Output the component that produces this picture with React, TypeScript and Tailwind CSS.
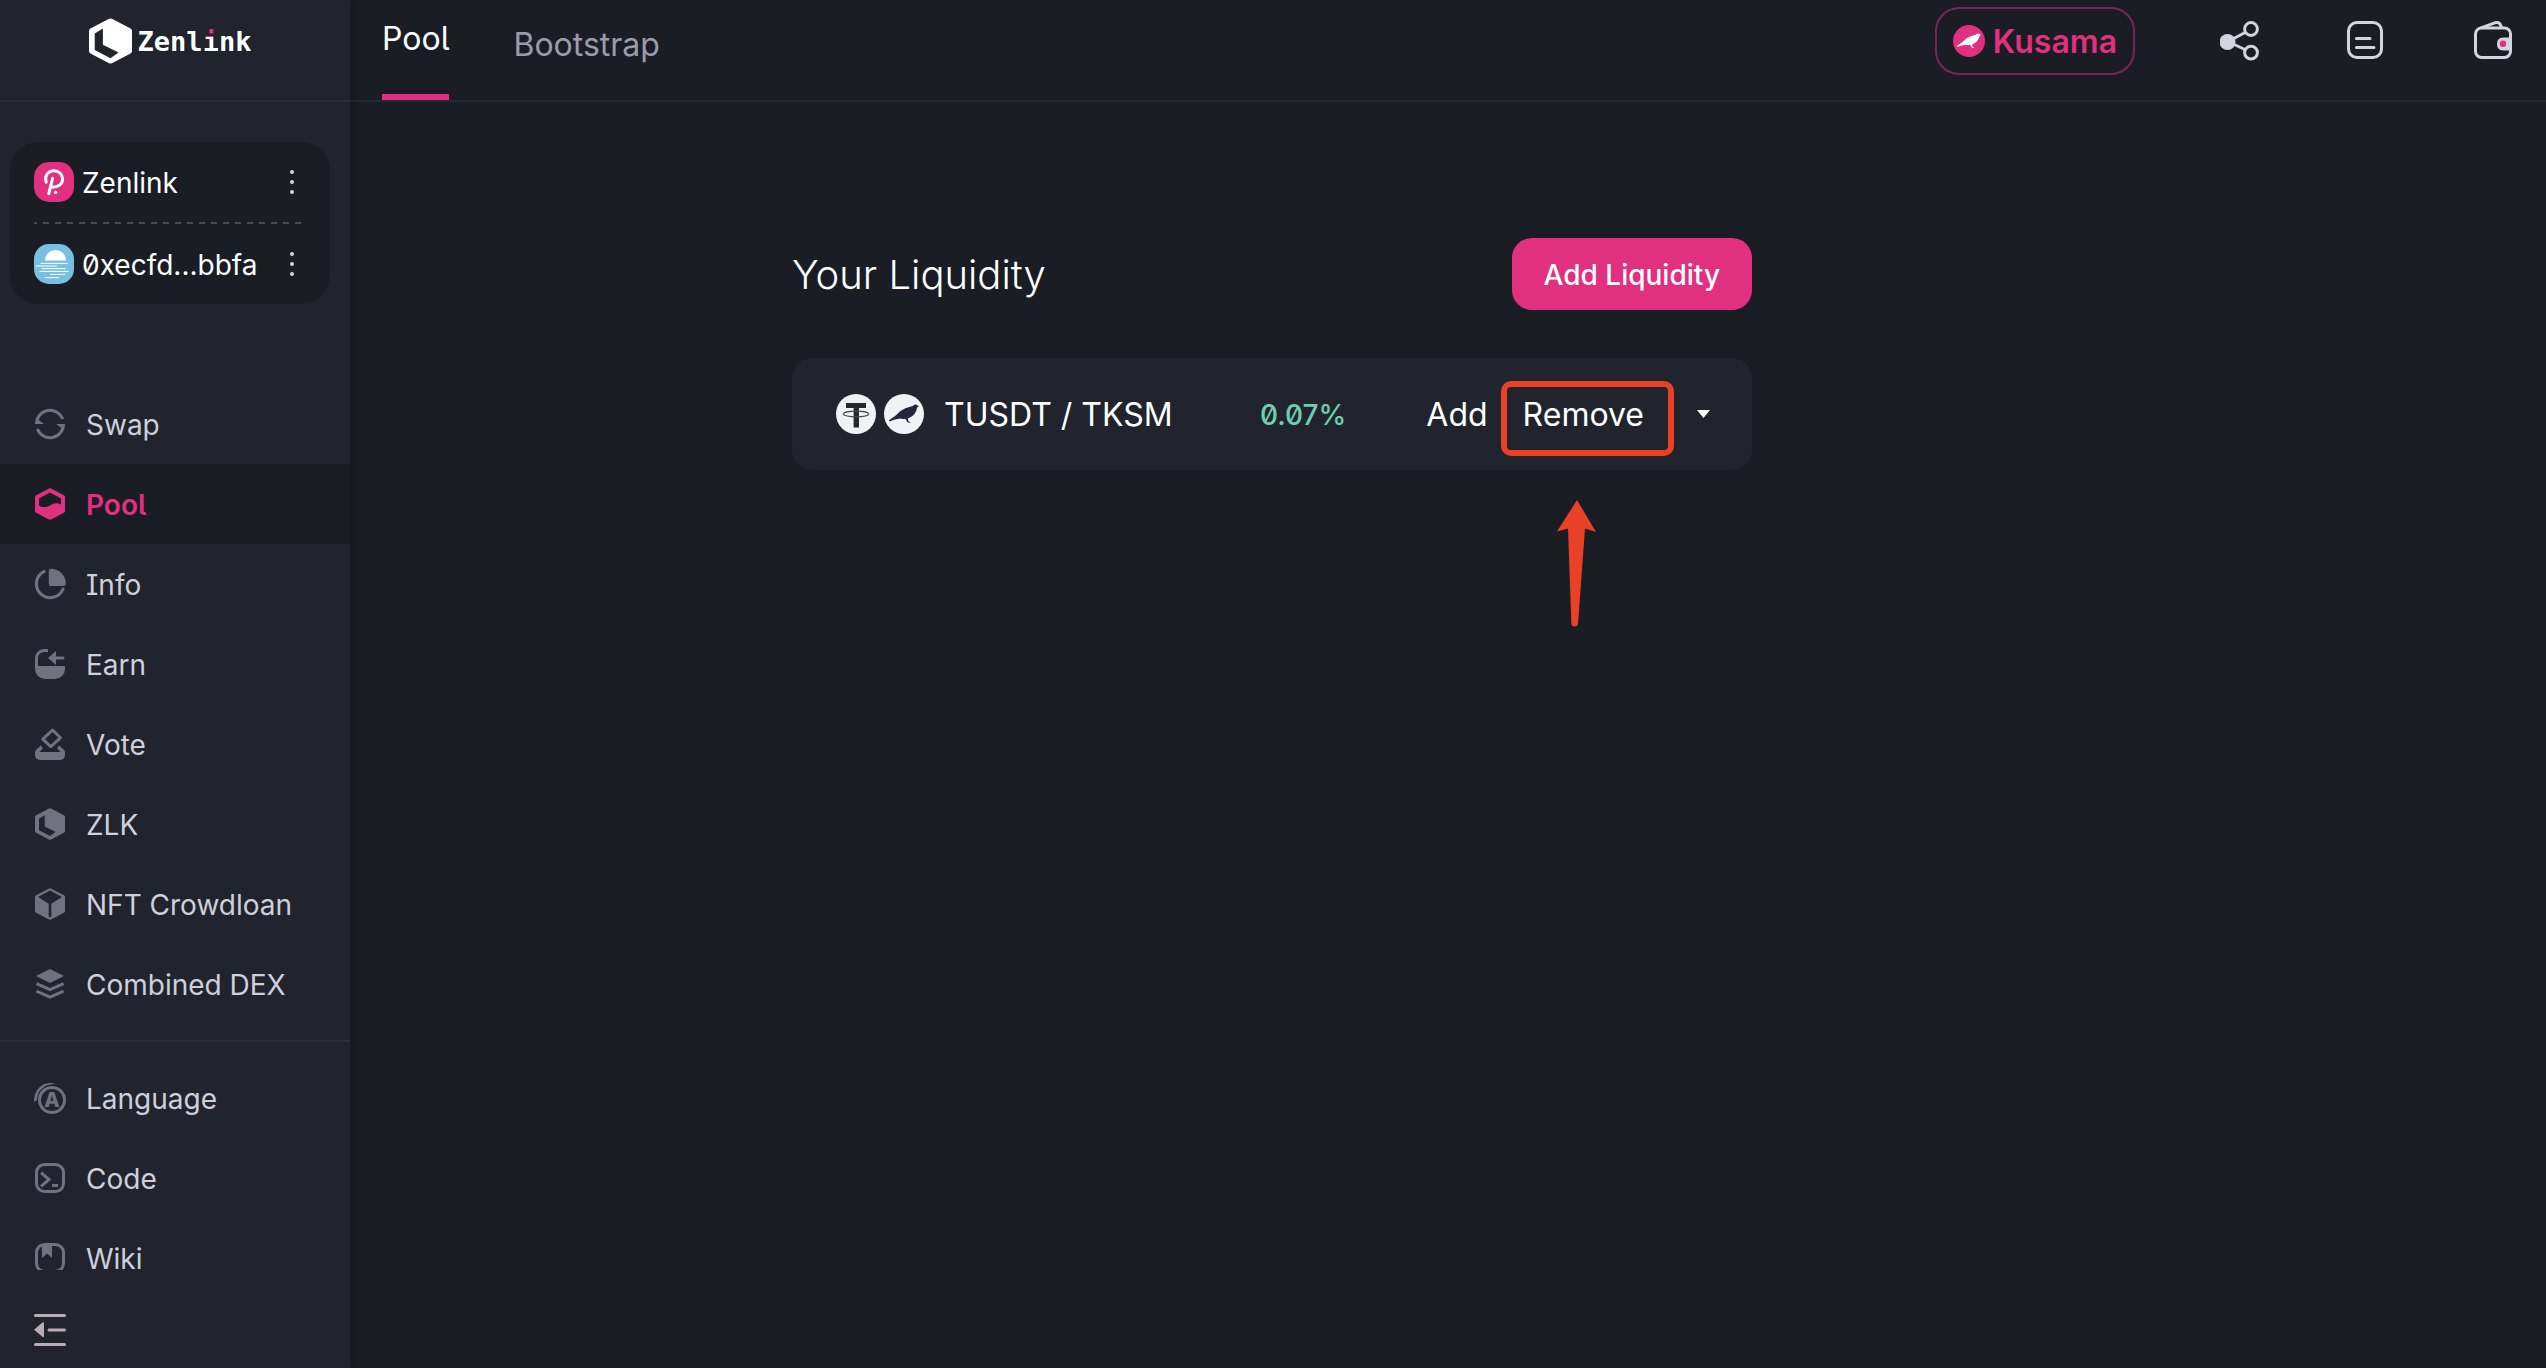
import type { ReactNode } from "react";

const HEX = "M15 .5Q16 0 17 .5L30 7.2Q31 7.8 31 9V23Q31 24.2 30 24.8L17 31.5Q16 32 15 31.5L2 24.8Q1 24.2 1 23V9Q1 7.8 2 7.2Z";
const HEX_CUT = "M10.7 7.3V18.6L21.6 24L16 28L5 22.2V10.8Z";
const BIRD =
  "M35 12.6L33.4 11.2Q31.6 9.9 29.6 11.2Q28.6 12.4 27 12.6Q21 14 16.5 17Q12 22 5 26.2Q4.6 27.4 6 27.2Q11 25.4 16 24.6Q18.6 25.4 21 24.8Q22.6 26 23.2 28Q24.4 28.9 26.8 28.6L24.6 27.4L23.8 24.6Q29.6 22 31.6 18Q32.8 15.6 33 13.6Z";

function Icon({ children, className = "size-8 shrink-0 text-[#70727f]" }: { children: ReactNode; className?: string }) {
  return (
    <svg viewBox="0 0 32 32" className={className} fill="currentColor" aria-hidden="true">
      {children}
    </svg>
  );
}

const line = { fill: "none", stroke: "currentColor", strokeWidth: 3 };

const primaryNav = [
  {
    label: "Swap",
    icon: (
      <>
        <path {...line} d="M2.5 16A13.5 13.5 0 0 1 28.6 11" />
        <path {...line} d="M29.5 16A13.5 13.5 0 0 1 3.4 21" />
        <path d="M1 16H9.8L4 11.6ZM31 16H22.2L28 20.4Z" />
      </>
    ),
  },
  {
    label: "Pool",
    active: true,
    icon: <path fillRule="evenodd" d={HEX + "M5 10.4V17.4C8.5 19.6 12 19.4 16 17.4C20.5 15 23.5 14.4 27 16.8V10.4L16 4.4Z"} />,
  },
  {
    label: "Info",
    icon: (
      <>
        <path d="M17 .8A15 15 0 0 1 31.8 16Q31.8 18 30 18H16.6Q14.8 18 14.8 16V2.5Q14.8.8 17 .8Z" />
        <path {...line} strokeLinecap="round" d="M10.2 3.4A13.8 13.8 0 1 0 29 21" />
      </>
    ),
  },
  {
    label: "Earn",
    icon: (
      <>
        <path {...line} d="M14 2.5H10A7.5 7.5 0 0 0 2.5 10V20" />
        <path d="M1 18H31V21A10 10 0 0 1 21 31H11A10 10 0 0 1 1 21Z" />
        <path d="M14 10L22 3V17Z" />
        <path {...line} strokeLinecap="round" d="M21 10H29" />
      </>
    ),
  },
  {
    label: "Vote",
    icon: (
      <>
        <path {...line} strokeLinejoin="round" d="M18.6 2L26.4 9.8L16.8 18.6L8.8 11.2Z" />
        <path d="M1 24H31V27A5 5 0 0 1 26 32H6A5 5 0 0 1 1 27Z" />
        <path d="M1 24.5Q1 22.6 2.4 21.4L6.8 17.6L9 20.2L5 24.5ZM31 24.5Q31 22.6 29.6 21.4L25.2 17.6L23 20.2L27 24.5Z" />
      </>
    ),
  },
  { label: "ZLK", icon: <path fillRule="evenodd" d={HEX + HEX_CUT} /> },
  {
    label: "NFT Crowdloan",
    icon: <path fillRule="evenodd" d={HEX + "M16 2.4L28 9L17.3 15.8V29H14.7V15.8L4 9Z"} />,
  },
  {
    label: "Combined DEX",
    icon: (
      <>
        <path d="M16 1L30 8L16 15L2 8Z" />
        <path {...line} d="M2.4 15.6L16 21.6L29.6 15.6M2.4 23.2L16 29.2L29.6 23.2" />
      </>
    ),
  },
];

const secondaryNav = [
  {
    label: "Language",
    icon: (
      <>
        <circle {...line} cx="18" cy="18" r="12.5" />
        <path d="M21.5 1.8Q12-.6 5.6 5.2Q-.8 11.6.2 20L3 18Q3 10.4 8.4 6.2Q12.6 2.4 17 2.6Z" />
        <text x="18" y="25" textAnchor="middle" fontSize="20" fontWeight="800" fontFamily="Inter, sans-serif">
          A
        </text>
      </>
    ),
  },
  {
    label: "Code",
    icon: (
      <>
        <rect {...line} x="2.5" y="2.5" width="27" height="27" rx="8" />
        <path {...line} d="M7 10.6L15 17.6L7 24.4" />
        <path d="M18 22H24V25H18Z" />
      </>
    ),
  },
  {
    label: "Wiki",
    icon: (
      <svg width="32" height="28">
        <rect {...line} x="2.5" y="2.5" width="27" height="27" rx="8" />
        <path d="M8 2H18V16L13 11.6L8 16Z" />
      </svg>
    ),
  },
];

function NavItem({ label, icon, active }: { label: string; icon: ReactNode; active?: boolean }) {
  return (
    <li>
      <a
        href={"#" + label.toLowerCase().replace(" ", "-")}
        aria-current={active ? "page" : undefined}
        className={
          active
            ? "flex h-20 items-center gap-5 bg-[#1b1d25] pl-[34px] font-semibold text-[#e0307f] [font-feature-settings:'cv05']"
            : "flex h-20 items-center gap-5 pl-[34px] text-[#cfd0db] [font-feature-settings:'cv08']"
        }
      >
        <Icon className={active ? "size-8 shrink-0" : "size-8 shrink-0 text-[#70727f]"}>{icon}</Icon>
        <span className="pt-0.5">{label}</span>
      </a>
    </li>
  );
}

function MoreButton({ label }: { label: string }) {
  return (
    <button type="button" aria-label={label} className="ml-auto mr-3 flex flex-col gap-[6px]">
      <span className="size-1 rounded-full bg-[#d5d6de]" />
      <span className="size-1 rounded-full bg-[#d5d6de]" />
      <span className="size-1 rounded-full bg-[#d5d6de]" />
    </button>
  );
}

function Sidebar() {
  return (
    <aside className="z-10 flex w-[350px] shrink-0 flex-col bg-[#21242c] text-[28px] shadow-[2px_0_8px_rgba(0,0,0,0.25)]">
      <div className="flex h-[102px] justify-center border-b-2 border-[#2a2c35] pt-4 pr-[10px]">
        <a href="#home" className="flex h-[50px] items-center gap-[6px]">
          <svg viewBox="1 0 30 32" className="h-12 w-[43px] text-white" fill="currentColor" aria-hidden="true">
            <path fillRule="evenodd" d={HEX + HEX_CUT} />
          </svg>
          <span className="pt-0.5 font-['DejaVu_Sans_Mono',monospace] text-[27px] leading-8 font-bold text-white">
            Zenl
            <span className="bg-[linear-gradient(to_bottom,#e0307f_36%,#ffffff_36%)] bg-clip-text text-transparent">i</span>
            nk
          </span>
        </a>
      </div>

      <div className="mx-[10px] mt-10 w-80 rounded-[28px] bg-[#1b1d25] px-6 py-5 text-white">
        <div className="flex h-10 items-center gap-2">
          <svg viewBox="0 0 40 40" className="size-10" aria-hidden="true">
            <rect width="40" height="40" rx="15" fill="#e0307f" />
            <path
              d="M12.2 20.2C10 14.4 14 8.7 20 8.7C25.2 8.7 28.6 12.6 28.6 17C28.6 22 24.4 25.6 17.2 25.2M18.6 16.4L14.8 31.6"
              fill="none"
              stroke="white"
              strokeWidth="3"
              strokeLinecap="round"
            />
            <circle cx="21.6" cy="30.4" r="1.7" fill="white" />
          </svg>
          <span className="pt-0.5">Zenlink</span>
          <MoreButton label="Zenlink options" />
        </div>
        <div className="my-5 h-0.5 bg-[repeating-linear-gradient(to_right,#484a53_0_3px,transparent_3px_9px,#484a53_9px_12px)]" />
        <div className="flex h-10 items-center gap-2">
          <svg viewBox="0 0 40 40" className="size-10" aria-hidden="true">
            <rect width="40" height="40" rx="15" fill="#78bfe0" />
            <path d="M11 16.4A10.4 10.4 0 0 1 32 16.4Z" fill="white" />
            <path
              d="M7 19.4H33.6M2.4 22H22.4M8 24.6H31.4M6 27.4H34.6M16.6 30.4H31M11 33.6H25"
              stroke="white"
              strokeWidth="1"
              strokeLinecap="round"
            />
          </svg>
          <span className="pt-0.5 [font-feature-settings:'zero']">0xecfd...bbfa</span>
          <MoreButton label="Account options" />
        </div>
      </div>

      <nav aria-label="Main" className="mt-20">
        <ul className="border-b-2 border-[#2d2f38] pb-4">
          {primaryNav.map((item) => (
            <NavItem key={item.label} {...item} />
          ))}
        </ul>
        <ul className="pt-4">
          {secondaryNav.map((item) => (
            <NavItem key={item.label} {...item} />
          ))}
        </ul>
      </nav>

      <button type="button" aria-label="Collapse menu" className="mt-4 ml-[34px] size-8 text-[#b7adb3]">
        <Icon className="size-8">
          <path d="M0 15.8L8.4 8.6Q10 7.6 10 9.4V22Q10 24 8.4 22.8Z" />
          <path {...line} strokeLinecap="round" d="M1.5 1.5H30.5M15 16H30.5M1.5 30.5H30.5" />
        </Icon>
      </button>
    </aside>
  );
}

function Header() {
  return (
    <header className="flex h-[102px] justify-between border-b-2 border-[#252830] px-8">
      <nav aria-label="Pool sections" className="flex h-[100px] items-start gap-16 text-[32px] leading-[42px]">
        <a href="#pool" aria-current="page" className="h-full border-b-[6px] border-[#e0307f] pt-[18px] text-white [font-feature-settings:'cv05']">
          Pool
        </a>
        <a href="#bootstrap" className="pt-6 text-[#9b9ca8]">
          Bootstrap
        </a>
      </nav>
      <div className="flex h-[82px] items-center">
        <button
          type="button"
          className="mr-[85px] flex h-[68px] items-center gap-2 rounded-[24px] border-2 border-[#77265a] px-4 text-[32px] font-semibold text-[#e0307f]"
        >
          <svg viewBox="0 0 40 40" className="size-8" aria-hidden="true">
            <circle cx="20" cy="20" r="20" fill="#e0307f" />
            <path d={BIRD} fill="white" />
          </svg>
          <span className="pt-0.5">Kusama</span>
        </button>
        <div className="flex gap-[87px] text-[#d3d4de]">
          <button type="button" aria-label="Share">
            <svg viewBox="0 0 40 40" className="size-10" fill="none" stroke="currentColor" strokeWidth="3" aria-hidden="true">
              <circle cx="7.5" cy="21" r="8" fill="currentColor" stroke="none" />
              <circle cx="31" cy="8" r="6.4" />
              <circle cx="31" cy="31.6" r="6.4" />
              <path d="M11 19L26 11M11 22L26 29" />
            </svg>
          </button>
          <button type="button" aria-label="News">
            <svg viewBox="0 0 40 40" className="size-10" fill="none" stroke="currentColor" strokeWidth="3" strokeLinecap="round" aria-hidden="true">
              <rect x="1.5" y="1.5" width="33" height="35" rx="8.5" />
              <path d="M9.4 17.6H23M9.4 26.4H27" />
            </svg>
          </button>
          <button type="button" aria-label="Wallet">
            <svg viewBox="0 0 40 40" className="size-10" fill="none" stroke="currentColor" strokeWidth="3" aria-hidden="true">
              <rect x="1.5" y="7" width="35" height="29.4" rx="6" />
              <path d="M7 7L21.4 1.6Q24.4 .8 26 3L28.2 7.4" />
              <path d="M37 16.4H29Q23 16.4 23 23Q23 29.4 29 29.4H37Z" fill="currentColor" stroke="none" />
              <circle cx="29" cy="22.8" r="3.2" fill="#e0307f" stroke="none" />
            </svg>
          </button>
        </div>
      </div>
    </header>
  );
}

function PoolRow() {
  return (
    <article className="mt-12 flex h-28 items-center rounded-[20px] bg-[#21242c] pr-[42px] pl-11 text-[32px] text-white">
      <div className="flex gap-2">
        <svg viewBox="0 0 40 40" className="size-10" aria-hidden="true">
          <circle cx="20" cy="20" r="20" fill="#f0f1f5" />
          <path d="M10 9H30V14H23V33.6H17.6V14H10Z" fill="#25282a" />
          <ellipse cx="20" cy="20" rx="12.6" ry="2.8" fill="none" stroke="#4b4d4f" strokeWidth="1.2" />
        </svg>
        <svg viewBox="0 0 40 40" className="size-10" aria-hidden="true">
          <circle cx="20" cy="20" r="20" fill="#f0f1f5" />
          <path d={BIRD} fill="#23263a" />
        </svg>
      </div>
      <h2 className="ml-5 flex-1 pt-0.5">TUSDT / TKSM</h2>
      <span className="mr-20 pt-0.5 text-[28px] font-medium text-[#6fceae] [font-feature-settings:'zero']">0.07%</span>
      <button type="button" className="pt-0.5">Add</button>
      <div className="relative ml-[35px]">
        <button type="button" className="pt-0.5">Remove</button>
        <div className="pointer-events-none absolute -top-2 -left-[22px] h-[75px] w-[173px] rounded-[10px] border-[6px] border-[#ea4025]" />
        <svg
          viewBox="0 0 40 127"
          className="pointer-events-none absolute top-[111px] left-[34px] h-[127px] w-10"
          fill="#ea4025"
          aria-hidden="true"
        >
          <path d="M20 0L39 32L28 28.6L21 124Q20.6 126.4 17.6 126.4Q14.6 126.4 14.4 124L11 28.4L0 31.6Z" />
        </svg>
      </div>
      <button type="button" aria-label="Show details" className="ml-[53px]">
        <svg viewBox="0 0 13 8" className="h-2 w-[13px]" fill="currentColor" aria-hidden="true">
          <path d="M0 0H13L6.5 8Z" />
        </svg>
      </button>
    </article>
  );
}

export default function App() {
  return (
    <div className="flex min-h-screen bg-[#1b1d25] font-[Inter,sans-serif] [font-optical-sizing:none]">
      <Sidebar />
      <div className="min-w-0 flex-1">
        <Header />
        <main className="flex justify-center pt-[136px] pr-[352px]">
          <section className="w-full max-w-[960px]">
            <div className="flex items-center justify-between">
              <h1 className="pt-0.5 text-[40px] font-light text-white">Your Liquidity</h1>
              <button type="button" className="h-[72px] rounded-[20px] bg-[#e0307f] px-8 pt-0.5 text-[28px] font-medium text-white">
                Add Liquidity
              </button>
            </div>
            <PoolRow />
          </section>
        </main>
      </div>
    </div>
  );
}
